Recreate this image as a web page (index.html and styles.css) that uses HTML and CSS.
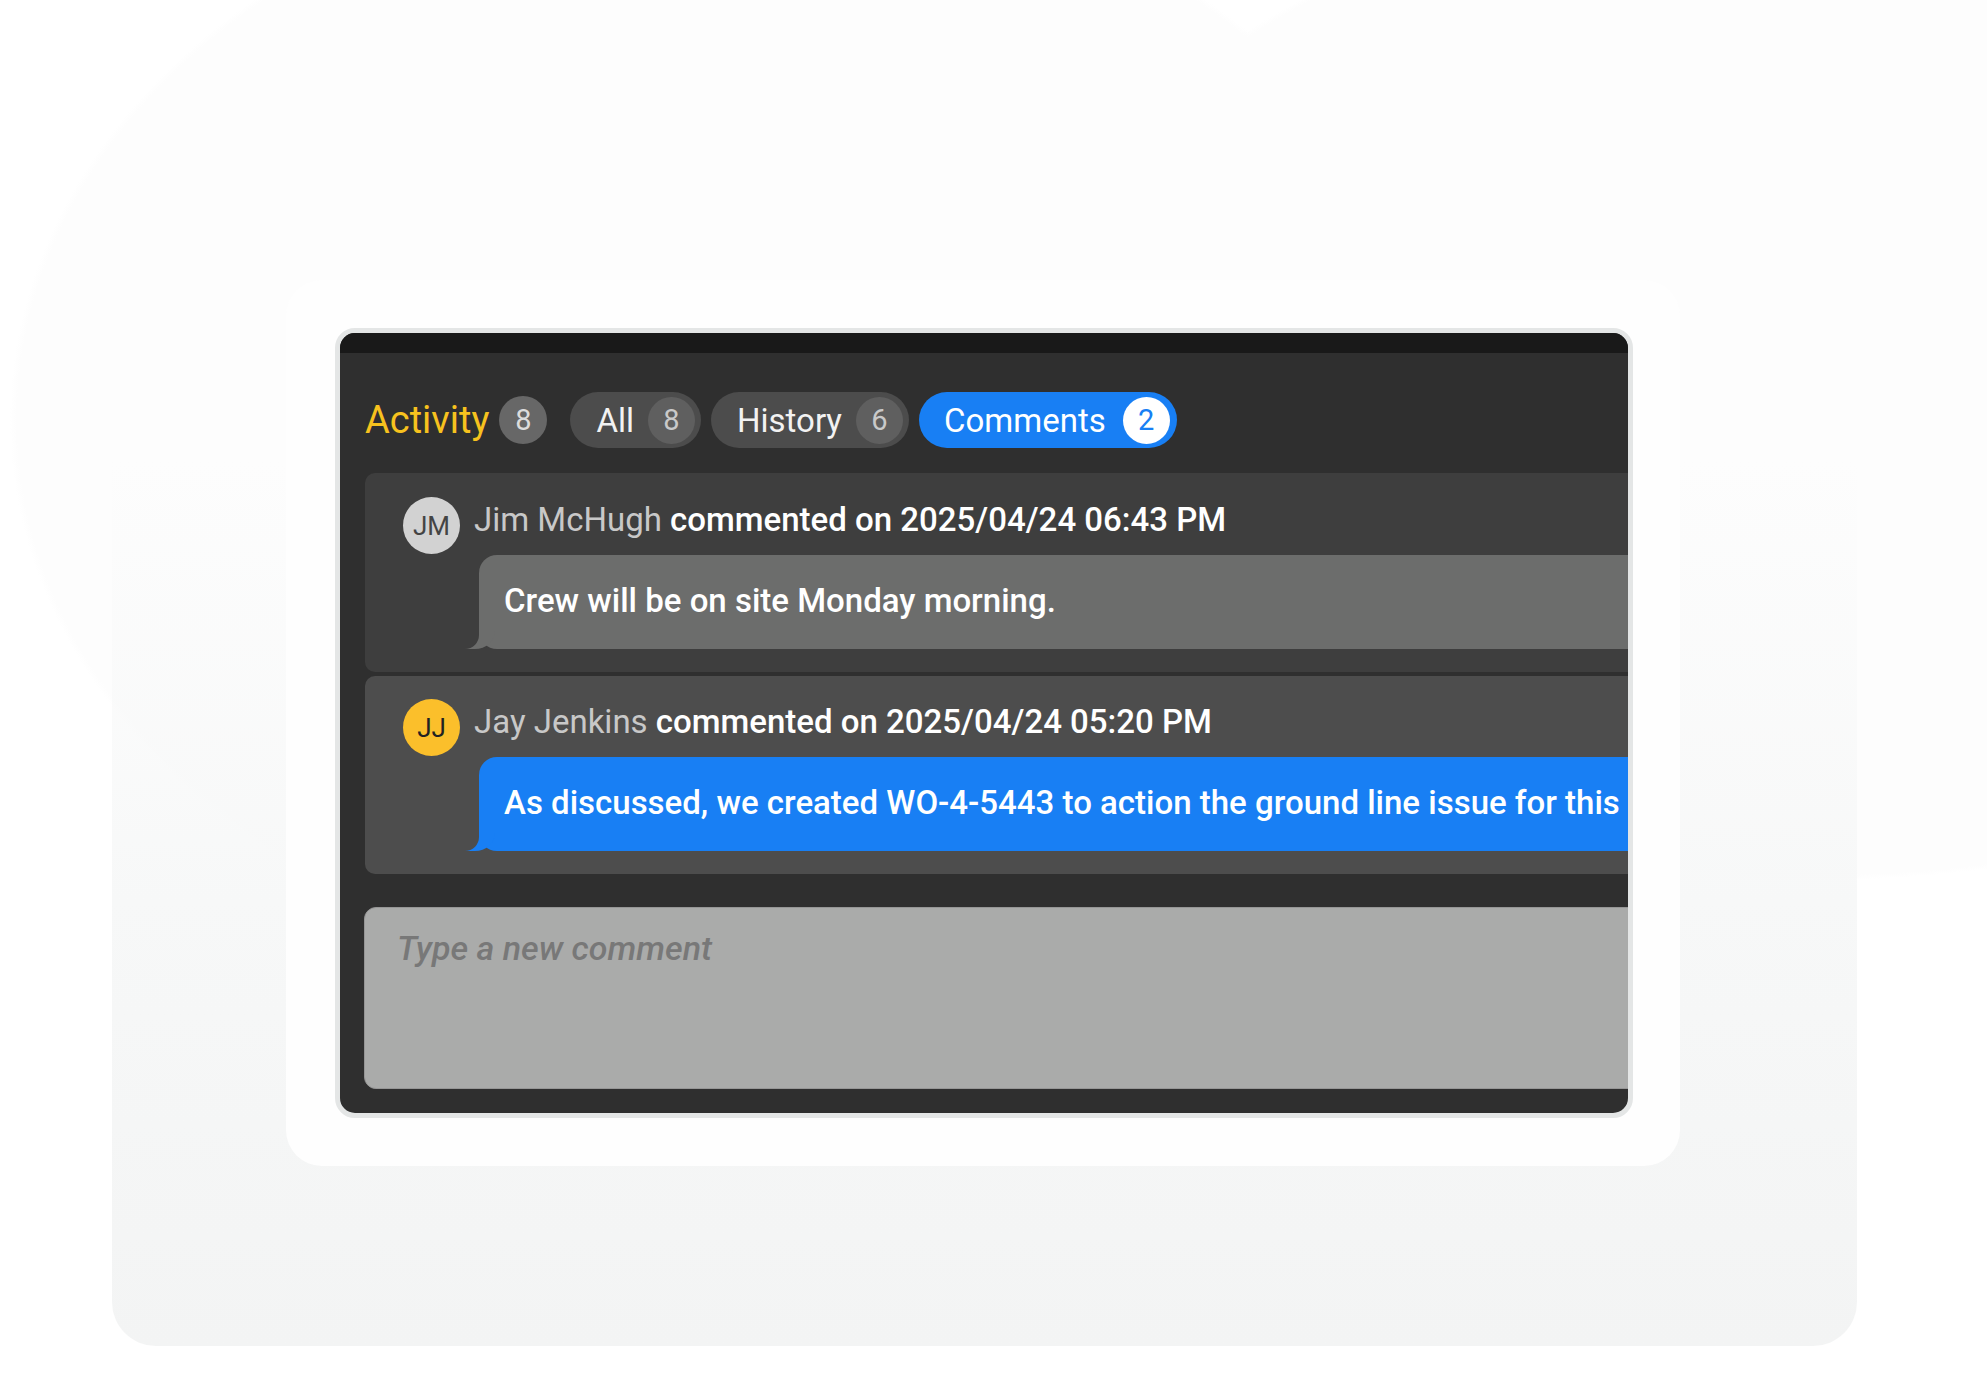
FILE: index.html
```html
<!DOCTYPE html>
<html lang="en">
<head>
    <meta charset="UTF-8">
    <meta name="viewport" content="width=device-width, initial-scale=1.0">
    <title>Activity</title>
    <link rel="stylesheet" href="styles.css">
</head>
<body>
    <div class="backdrop">
        <div class="frame">
            <div class="window">
                <div class="titlebar"></div>
                <div class="activity">
                    <div class="tabs">
                        <div class="title">
                            <span class="title-text">Activity</span>
                            <span class="count">8</span>
                        </div>
                        <button class="pill">All <span class="num">8</span></button>
                        <button class="pill">History <span class="num">6</span></button>
                        <button class="pill active">Comments <span class="num">2</span></button>
                    </div>

                    <div class="feed">
                        <div class="card">
                            <div class="head">
                                <span class="avatar grey">JM</span>
                                <span class="meta"><span class="name">Jim McHugh</span> commented on 2025/04/24 06:43 PM</span>
                            </div>
                            <div class="bubble">Crew will be on site Monday morning.</div>
                        </div>
                        <div class="card hover">
                            <div class="head">
                                <span class="avatar yellow">JJ</span>
                                <span class="meta"><span class="name">Jay Jenkins</span> commented on 2025/04/24 05:20 PM</span>
                            </div>
                            <div class="bubble blue">As discussed, we created WO-4-5443 to action the ground line issue for this asset.</div>
                        </div>
                    </div>

                    <div class="composer">
                        <textarea placeholder="Type a new comment"></textarea>
                    </div>
                </div>
            </div>
        </div>
    </div>
</body>
</html>
```

FILE: styles.css
```css
body {
    margin: 0;
    height: 1398px;
    overflow: hidden;
    font-family: 'Roboto', 'Liberation Sans', sans-serif;
    background-color: #fff;
    background-image:
        radial-gradient(ellipse 720px 560px at 730px 420px, #fdfdfd 0, #fdfdfd 99%, transparent 100%),
        radial-gradient(ellipse 800px 500px at 1820px 380px, #fdfdfd 0, #fdfdfd 99%, transparent 100%);
    background-repeat: no-repeat;
}
.backdrop {
    box-sizing: border-box;
    margin-left: 112px;
    width: 1745px;
    height: 1346px;
    padding: 280px 0 0 174px;
    border-radius: 0 0 44px 44px;
    background: linear-gradient(to bottom, rgba(243, 244, 244, 0) 0, rgba(243, 244, 244, 0) 460px, #f7f8f8 900px, #f3f4f4 1346px);
}
.frame {
    box-sizing: border-box;
    width: 1394px;
    padding: 48px 47px 48px 49px;
    border-radius: 36px;
    background-color: #fefefe;
}
.window {
    height: 780px;
    border: 5px solid #e4e6e6;
    border-radius: 20px;
    overflow: hidden;
    background-color: #2f2f2f;
}
.titlebar {
    height: 20px;
    background-color: #191919;
}
.activity {
    padding: 39px 0 0 25px;
}
.tabs {
    display: flex;
    align-items: center;
    gap: 10px;
    height: 56px;
}
.title {
    display: flex;
    align-items: center;
    gap: 10px;
    margin-right: 13px;
}
.title-text {
    color: #f7c21e;
    font-size: 38px;
}
.count {
    display: flex;
    align-items: center;
    justify-content: center;
    width: 48px;
    height: 48px;
    border-radius: 50%;
    background-color: #676767;
    color: #dcdcdc;
    font-size: 29px;
}
.pill {
    display: flex;
    align-items: center;
    gap: 14px;
    height: 56px;
    padding: 0 6px 0 26px;
    border: none;
    border-radius: 28px;
    background-color: #4c4c4c;
    color: #f2f2f2;
    font-family: inherit;
    font-size: 33px;
}
.pill .num {
    display: flex;
    align-items: center;
    justify-content: center;
    width: 47px;
    height: 47px;
    border-radius: 50%;
    background-color: #5f5f5f;
    color: #c9c9c9;
    font-size: 29px;
}
.pill.active {
    gap: 17px;
    padding-left: 25px;
    padding-right: 7px;
    background-color: #187ff4;
    color: #fff;
}
.pill.active .num {
    background-color: #fff;
    color: #187ff4;
}
.feed {
    display: flex;
    flex-direction: column;
    gap: 4px;
    width: 1700px;
    margin-top: 25px;
}
.card {
    --card-bg: #3e3e3e;
    padding: 24px 0 23px 38px;
    border-radius: 10px 0 0 10px;
    background-color: var(--card-bg);
}
.card.hover {
    --card-bg: #4d4d4d;
    padding-top: 23px;
}
.head {
    display: flex;
    align-items: center;
    gap: 14px;
    height: 57px;
    font-size: 33px;
}
.avatar {
    display: flex;
    align-items: center;
    justify-content: center;
    width: 57px;
    height: 57px;
    border-radius: 50%;
    font-size: 26px;
    flex-shrink: 0;
}
.avatar.grey {
    background-color: #d2d2d2;
    color: #444;
}
.avatar.yellow {
    background-color: #fbbf2b;
    color: #222;
}
.meta {
    margin-top: -12px;
    color: #fff;
    font-weight: 500;
    white-space: nowrap;
}
.name {
    color: #c8c8c8;
    font-weight: 400;
}
.bubble {
    position: relative;
    height: 94px;
    margin: 1px 0 0 76px;
    padding: 0 25px;
    border-radius: 18px 0 0 18px;
    background-color: #6c6d6c;
    color: #fff;
    font-size: 33px;
    font-weight: 500;
    line-height: 92px;
    white-space: nowrap;
}
.bubble::before {
    content: "";
    position: absolute;
    left: -16px;
    bottom: 0;
    width: 32px;
    height: 24px;
    background-color: #6c6d6c;
    border-bottom-right-radius: 20px 18px;
}
.bubble::after {
    content: "";
    position: absolute;
    left: -40px;
    bottom: 0;
    width: 40px;
    height: 24px;
    background-color: var(--card-bg);
    border-bottom-right-radius: 14px;
}
.bubble.blue,
.bubble.blue::before {
    background-color: #187ff4;
}
.composer {
    margin-top: 33px;
    margin-left: -1px;
}
textarea {
    box-sizing: border-box;
    display: block;
    width: 1500px;
    height: 182px;
    padding: 20px 32px;
    border: 1px solid #969696;
    border-radius: 12px;
    background-color: #aaabaa;
    font-family: 'Roboto', 'Liberation Sans', sans-serif;
    font-size: 34px;
    font-style: italic;
    font-weight: 500;
    resize: none;
    outline: none;
}
textarea::placeholder {
    color: #787878;
}
```
